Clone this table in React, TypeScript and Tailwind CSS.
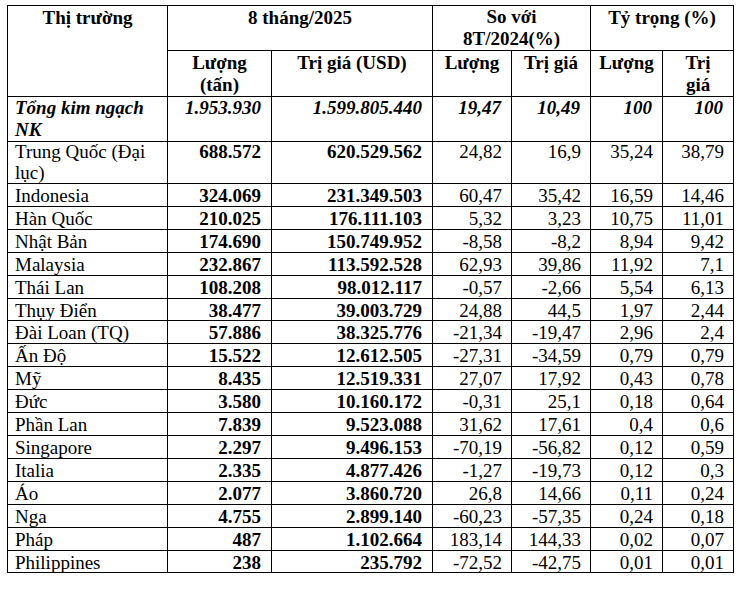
const rows: [string, string, string, string, string, string, string][] = [
    ['Indonesia', '324.069', '231.349.503', '60,47', '35,42', '16,59', '14,46'],
    ['Hàn Quốc', '210.025', '176.111.103', '5,32', '3,23', '10,75', '11,01'],
    ['Nhật Bản', '174.690', '150.749.952', '-8,58', '-8,2', '8,94', '9,42'],
    ['Malaysia', '232.867', '113.592.528', '62,93', '39,86', '11,92', '7,1'],
    ['Thái Lan', '108.208', '98.012.117', '-0,57', '-2,66', '5,54', '6,13'],
    ['Thụy Điển', '38.477', '39.003.729', '24,88', '44,5', '1,97', '2,44'],
    ['Đài Loan (TQ)', '57.886', '38.325.776', '-21,34', '-19,47', '2,96', '2,4'],
    ['Ấn Độ', '15.522', '12.612.505', '-27,31', '-34,59', '0,79', '0,79'],
    ['Mỹ', '8.435', '12.519.331', '27,07', '17,92', '0,43', '0,78'],
    ['Đức', '3.580', '10.160.172', '-0,31', '25,1', '0,18', '0,64'],
    ['Phần Lan', '7.839', '9.523.088', '31,62', '17,61', '0,4', '0,6'],
    ['Singapore', '2.297', '9.496.153', '-70,19', '-56,82', '0,12', '0,59'],
    ['Italia', '2.335', '4.877.426', '-1,27', '-19,73', '0,12', '0,3'],
    ['Áo', '2.077', '3.860.720', '26,8', '14,66', '0,11', '0,24'],
    ['Nga', '4.755', '2.899.140', '-60,23', '-57,35', '0,24', '0,18'],
    ['Pháp', '487', '1.102.664', '183,14', '144,33', '0,02', '0,07'],
    ['Philippines', '238', '235.792', '-72,52', '-42,75', '0,01', '0,01'],
];

// cells are top-aligned like the Word table; row-specific spacing below
const cell = 'border border-black align-top pb-0';
const name = `${cell} pl-[7px] pr-[4px] text-left`;
const num = `${cell} pr-[9px] text-right`;
const bnum = `${cell} pr-[10px] text-right font-bold`;
const head = `${cell} px-[4px] text-center font-bold leading-[22px]`;

const body = 'pt-[3px] leading-[18.9px]';
const total = 'pt-0 leading-[22px]';
const tall = 'pt-0 leading-[20.5px]';

export default function App() {
    return (
        <div className="w-[752px] h-[595px] bg-white pl-[7px] pt-[5px] text-black text-[19px] font-['Liberation_Serif','Times_New_Roman',serif]">
            <table className="table-fixed border-collapse w-[726px]">
                <colgroup>
                    <col className="w-[160px]" />
                    <col className="w-[104px]" />
                    <col className="w-[161px]" />
                    <col className="w-[79px]" />
                    <col className="w-[79px]" />
                    <col className="w-[72px]" />
                    <col className="w-[71px]" />
                </colgroup>
                <thead>
                    <tr className="h-[45px]">
                        <th rowSpan={2} className={`${head} pt-[1px]`}>Thị trường</th>
                        <th colSpan={2} className={`${head} pt-[1px]`}>8 tháng/2025</th>
                        <th colSpan={2} className={`${head} pt-0`}>So với<br />8T/2024(%)</th>
                        <th colSpan={2} className={`${head} pt-[1px]`}>Tỷ trọng (%)</th>
                    </tr>
                    <tr className="h-[46px]">
                        <th className={`${head} pt-[1px]`}>Lượng<br />(tấn)</th>
                        <th className={`${head} pt-[1px]`}>Trị giá (USD)</th>
                        <th className={`${head} pt-[1px]`}>Lượng</th>
                        <th className={`${head} pt-[1px]`}>Trị giá</th>
                        <th className={`${head} pt-[1px]`}>Lượng</th>
                        <th className={`${head} pt-[1px]`}>Trị<br />giá</th>
                    </tr>
                </thead>
                <tbody>
                    <tr className="h-[45px] italic font-bold">
                        <td className={`${name} ${total}`}>Tổng kim ngạch<br />NK</td>
                        <td className={`${bnum} ${total}`}>1.953.930</td>
                        <td className={`${bnum} ${total}`}>1.599.805.440</td>
                        <td className={`${bnum} ${total}`}>19,47</td>
                        <td className={`${bnum} ${total}`}>10,49</td>
                        <td className={`${bnum} ${total}`}>100</td>
                        <td className={`${bnum} ${total}`}>100</td>
                    </tr>
                    <tr className="h-[42px]">
                        <td className={`${name} ${tall}`}>Trung Quốc (Đại<br />lục)</td>
                        <td className={`${bnum} ${tall}`}>688.572</td>
                        <td className={`${bnum} ${tall}`}>620.529.562</td>
                        <td className={`${num} ${tall}`}>24,82</td>
                        <td className={`${num} ${tall}`}>16,9</td>
                        <td className={`${num} ${tall}`}>35,24</td>
                        <td className={`${num} ${tall}`}>38,79</td>
                    </tr>
                    {rows.map((r) => (
                        <tr key={r[0]}>
                            <td className={`${name} ${body}`}>{r[0]}</td>
                            <td className={`${bnum} ${body}`}>{r[1]}</td>
                            <td className={`${bnum} ${body}`}>{r[2]}</td>
                            <td className={`${num} ${body}`}>{r[3]}</td>
                            <td className={`${num} ${body}`}>{r[4]}</td>
                            <td className={`${num} ${body}`}>{r[5]}</td>
                            <td className={`${num} ${body}`}>{r[6]}</td>
                        </tr>
                    ))}
                </tbody>
            </table>
        </div>
    );
}
